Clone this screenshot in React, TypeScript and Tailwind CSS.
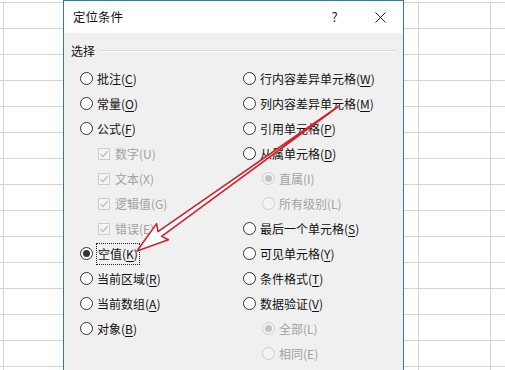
import type { ReactNode } from 'react';

type Item = {
  kind: 'radio' | 'check' | 'sub';
  label: string;
  hotkey: string;
  checked?: boolean;
  disabled?: boolean;
  focus?: boolean;
};

const leftItems: Item[] = [
  { kind: 'radio', label: '批注', hotkey: 'C' },
  { kind: 'radio', label: '常量', hotkey: 'O' },
  { kind: 'radio', label: '公式', hotkey: 'F' },
  { kind: 'check', label: '数字', hotkey: 'U', checked: true, disabled: true },
  { kind: 'check', label: '文本', hotkey: 'X', checked: true, disabled: true },
  { kind: 'check', label: '逻辑值', hotkey: 'G', checked: true, disabled: true },
  { kind: 'check', label: '错误', hotkey: 'E', checked: true, disabled: true },
  { kind: 'radio', label: '空值', hotkey: 'K', checked: true, focus: true },
  { kind: 'radio', label: '当前区域', hotkey: 'R' },
  { kind: 'radio', label: '当前数组', hotkey: 'A' },
  { kind: 'radio', label: '对象', hotkey: 'B' },
];

const rightItems: Item[] = [
  { kind: 'radio', label: '行内容差异单元格', hotkey: 'W' },
  { kind: 'radio', label: '列内容差异单元格', hotkey: 'M' },
  { kind: 'radio', label: '引用单元格', hotkey: 'P' },
  { kind: 'radio', label: '从属单元格', hotkey: 'D' },
  { kind: 'sub', label: '直属', hotkey: 'I', checked: true, disabled: true },
  { kind: 'sub', label: '所有级别', hotkey: 'L', disabled: true },
  { kind: 'radio', label: '最后一个单元格', hotkey: 'S' },
  { kind: 'radio', label: '可见单元格', hotkey: 'Y' },
  { kind: 'radio', label: '条件格式', hotkey: 'T' },
  { kind: 'radio', label: '数据验证', hotkey: 'V' },
  { kind: 'sub', label: '全部', hotkey: 'L', checked: true, disabled: true },
  { kind: 'sub', label: '相同', hotkey: 'E', disabled: true },
];

function RadioDot({ checked, disabled }: { checked?: boolean; disabled?: boolean }) {
  return (
    <span
      className={
        'flex h-[13px] w-[13px] shrink-0 items-center justify-center rounded-full border ' +
        (disabled ? 'border-[#cdcdcd] bg-[#f4f4f4]' : 'border-[#333333] bg-white')
      }
    >
      {checked && (
        <span
          className={
            'h-[7px] w-[7px] rounded-full ' + (disabled ? 'bg-[#c2c2c2]' : 'bg-[#333333]')
          }
        />
      )}
    </span>
  );
}

function CheckBox() {
  return (
    <span className="flex h-[12px] w-[12px] shrink-0 items-center justify-center border border-[#cccccc] bg-[#f4f4f4]">
      <svg width="10" height="10" viewBox="0 0 10 10">
        <path d="M1.5 5.2 L4 7.6 L8.6 2.2" fill="none" stroke="#b4b4b4" strokeWidth="1.1" />
      </svg>
    </span>
  );
}

function Option({ item }: { item: Item }) {
  let control: ReactNode;
  if (item.kind === 'check') control = <CheckBox />;
  else control = <RadioDot checked={item.checked} disabled={item.disabled} />;

  const indent = item.kind === 'check' ? 'pl-[18px] gap-[5px]' : item.kind === 'sub' ? 'pl-[19px] gap-[4px]' : 'gap-[4px]';

  return (
    <div className={'flex h-[25px] items-center ' + indent}>
      {control}
      <span
        className={
          'whitespace-nowrap leading-[18px] ' +
          (item.disabled ? 'text-[#a2a2a2]' : 'text-[#111111]') +
          (item.focus ? ' -ml-[1px] border border-dotted border-[#222222] px-[1px] py-[1px]' : '')
        }
      >
        {item.label}(
        {item.disabled ? item.hotkey : <span className="underline underline-offset-2">{item.hotkey}</span>})
      </span>
    </div>
  );
}

function SheetGrid() {
  return (
    <div className="pt-[2px]">
      {Array.from({ length: 15 }).map((_, i) => (
        <div key={i} className="flex h-[26px] border-t border-[#d4d4d4]">
          <div className="w-[3px]" />
          <div className="w-[415px] border-l border-[#d4d4d4]" />
          <div className="w-[72px] border-l border-[#d4d4d4]" />
          <div className="flex-1 border-l border-[#d4d4d4]" />
        </div>
      ))}
    </div>
  );
}

// red annotation arrow pointing at 空值(K)
function Arrow() {
  return (
    <svg className="pointer-events-none absolute left-0 top-0" width="505" height="370" viewBox="0 0 505 370">
      <polygon
        points="339,106 161.6,236.4 168.4,239.8 137,251 156.6,223.6 158,231.6"
        fill="#ffffff"
        stroke="#d4202a"
        strokeWidth="1.6"
        strokeLinejoin="round"
      />
    </svg>
  );
}

export default function App() {
  return (
    <div className="relative h-[370px] w-[505px] overflow-hidden bg-white font-['Noto_Sans_CJK_SC','Noto_Sans',sans-serif] text-[12px]">
      <SheetGrid />

      {/* dialog */}
      <div className="absolute left-[63px] top-0 flex h-[380px] w-[341px] flex-col border border-[#2f7f9c] bg-[#f0f0f0]">
        <div className="flex h-[32px] shrink-0 items-center bg-white">
          <span className="flex-1 pl-[9px] text-[12.5px] text-[#111111]">定位条件</span>
          <span className="w-[45px] text-center text-[13px] text-[#222222]">?</span>
          <span className="flex w-[46px] justify-center">
            <svg width="11" height="11" viewBox="0 0 11 11">
              <path d="M0.5 0.5 L10.5 10.5 M10.5 0.5 L0.5 10.5" stroke="#222222" strokeWidth="1" />
            </svg>
          </span>
        </div>

        <div className="flex items-center pt-[9px] pl-[7px] pr-[7px]">
          <span className="leading-[18px] text-[#111111]">选择</span>
          <div className="ml-[4px] flex-1 border-t border-b border-t-[#d9d9d9] border-b-white" />
        </div>

        <div className="mt-[6px] flex pl-[16px]">
          <div className="w-[163px]">
            {leftItems.map((it) => (
              <Option key={it.label} item={it} />
            ))}
          </div>
          <div className="flex-1">
            {rightItems.map((it) => (
              <Option key={it.label} item={it} />
            ))}
          </div>
        </div>
      </div>

      <Arrow />
    </div>
  );
}
